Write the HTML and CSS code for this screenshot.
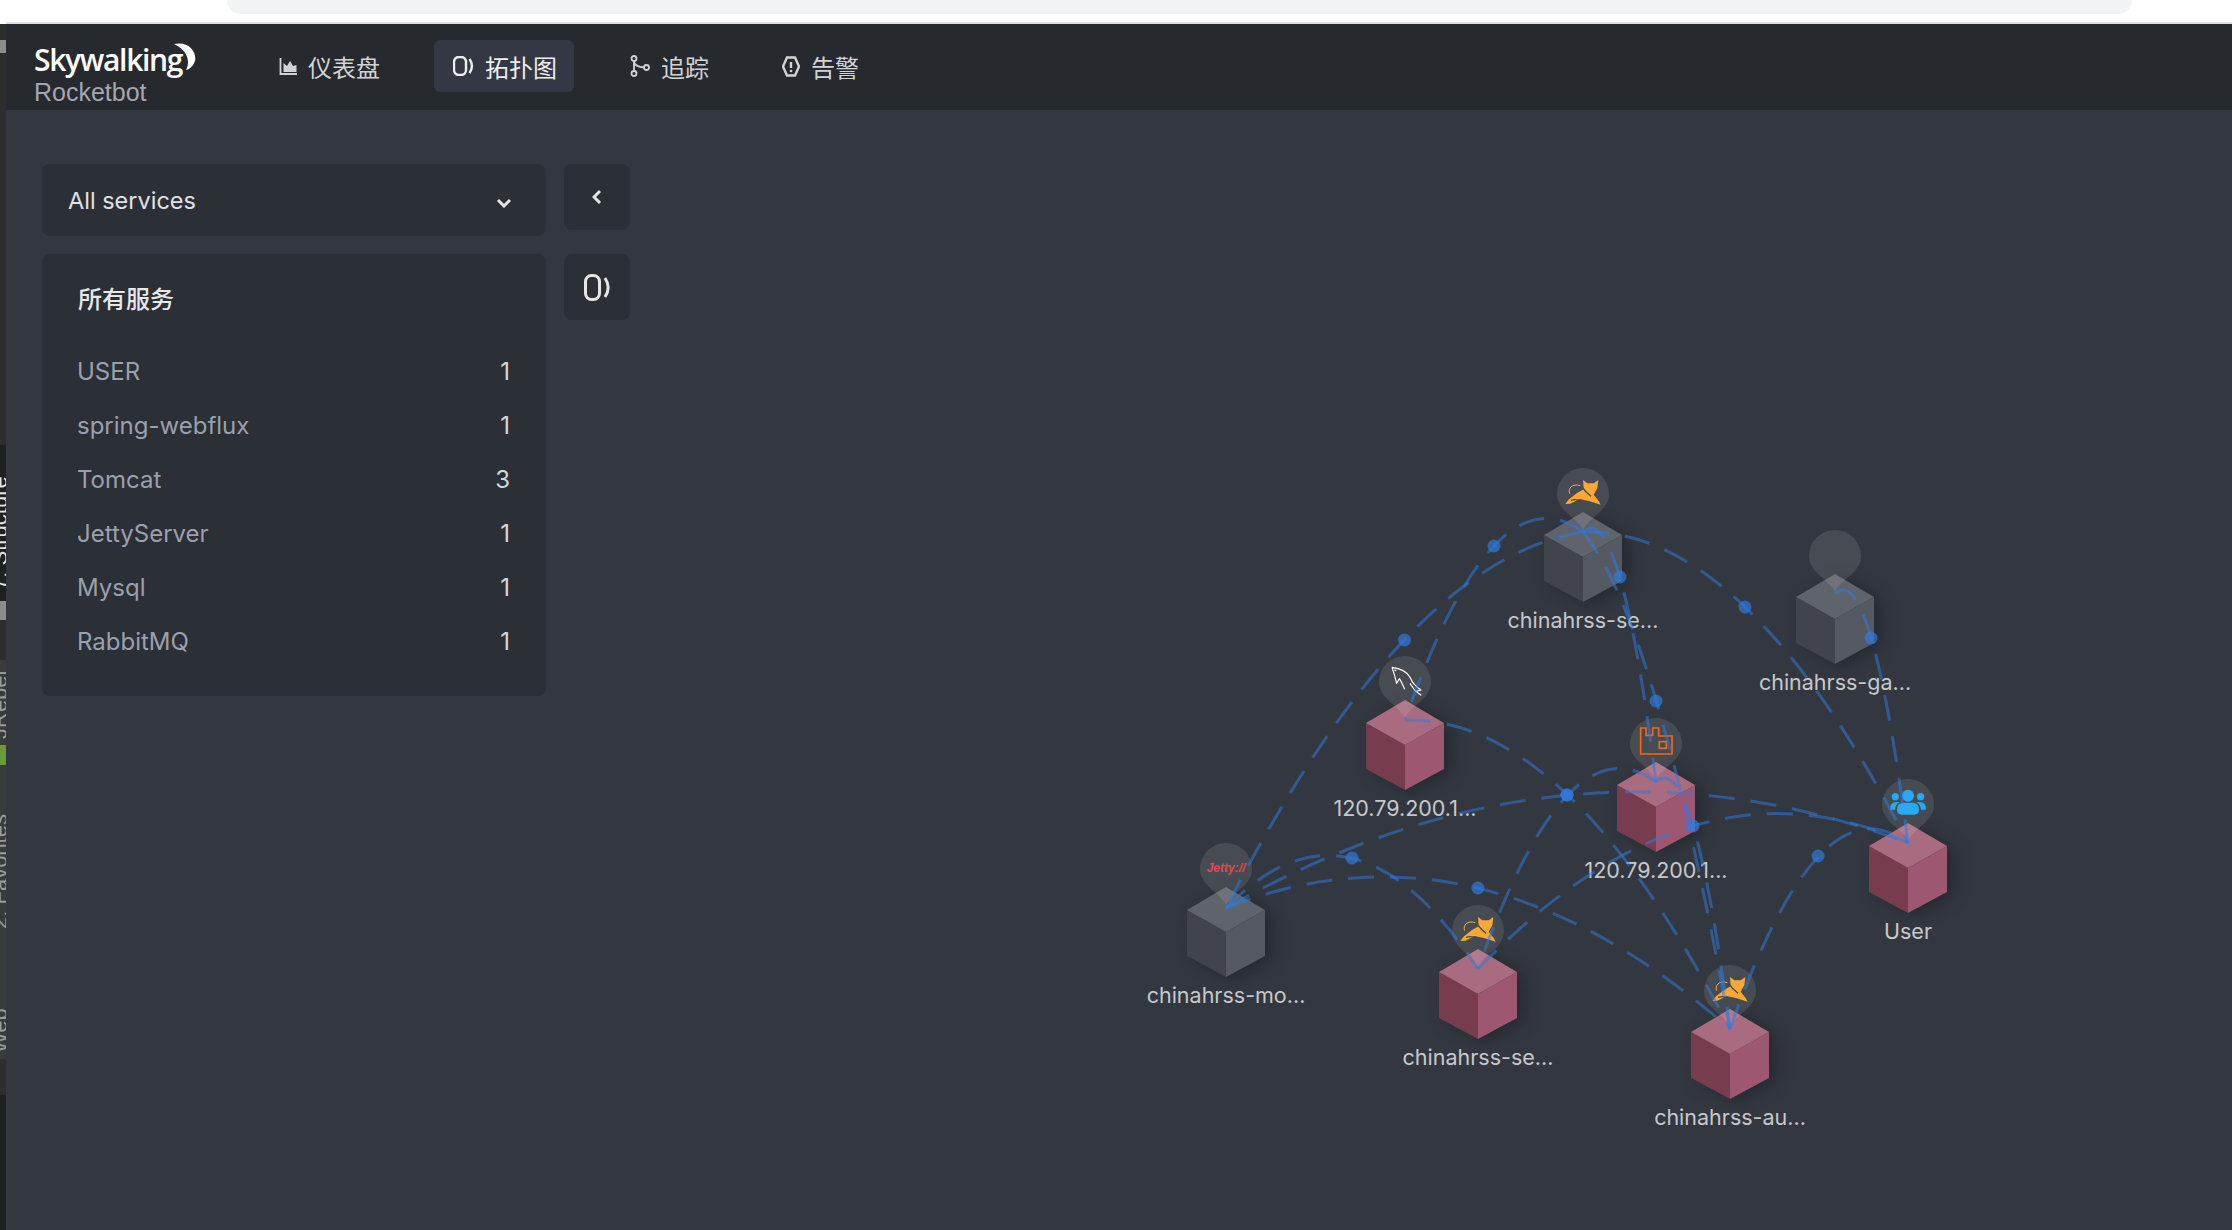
FILE: index.html
```html
<!DOCTYPE html>
<html lang="zh">
<head>
<meta charset="utf-8">
<title>Skywalking Rocketbot</title>
<link rel="stylesheet" href="styles.css">
</head>
<body>
<div class="strip">
  <div class="seg seg-white"></div>
  <div class="seg seg-dark seg-h16"></div>
  <div class="seg seg-grey seg-h13"></div>
  <div class="seg seg-dark seg-h392"></div>
  <div class="seg seg-black seg-h156"><span class="vtext vtext-light">7: Structure</span></div>
  <div class="seg seg-grey seg-h19"></div>
  <div class="seg seg-dark seg-h40"></div>
  <div class="seg seg-mid seg-h85"><span class="vtext">JRebel</span></div>
  <div class="seg seg-green seg-h20"></div>
  <div class="seg seg-mid seg-h170"><span class="vtext">2: Favorites</span></div>
  <div class="seg seg-mid seg-h124"><span class="vtext">Web</span></div>
  <div class="seg seg-dark seg-h36"></div>
  <div class="seg seg-black seg-fill"></div>
</div>
<div class="window">
  <div class="browserbar"><div class="urlfield"></div></div>
  <header class="header">
    <div class="logo">
      <div class="logo-main">Skywalking</div>
      <div class="logo-sub">Rocketbot</div>
      <svg class="moon" viewBox="0 0 24 28" width="24" height="28"><path d="M1 1 C15 -2 24 8 22 18 C20 24 15 27 13 27 C17 20 16 8 1 1Z"/></svg>
    </div>
    <nav class="nav">
      <a class="nav-item">
        <svg class="nav-icon" viewBox="0 0 18 20" width="18" height="20"><path class="ico-line" d="M1.500 2V18H18"/><path class="ico-fill" d="M4.500 16V7L8 10 11 5 14 10 17.500 9V16Z"/></svg>
        <span>仪表盘</span>
      </a>
      <a class="nav-item nav-active">
        <svg class="nav-icon" viewBox="0 0 21 20" width="21" height="20"><rect class="ico-line ico-mid" x="1" y="1" width="12" height="18" rx="5"/><path class="ico-line ico-mid" d="M16.500 3C20 8 20 12 16.500 17"/></svg>
        <span>拓扑图</span>
      </a>
      <a class="nav-item">
        <svg class="nav-icon" viewBox="0 0 20 22" width="20" height="22"><circle class="ico-line" cx="4" cy="3.500" r="2.500"/><circle class="ico-line" cx="4" cy="18.500" r="2.500"/><circle class="ico-line" cx="16.500" cy="12.500" r="2.500"/><path class="ico-line" d="M4 6V16M4 7C5 11 9 12 14 12.500"/></svg>
        <span>追踪</span>
      </a>
      <a class="nav-item">
        <svg class="nav-icon" viewBox="0 0 18 21" width="18" height="21"><path class="ico-line ico-mid" d="M5 1.500H13L17 10.500 13 19.500H5L1 10.500Z"/><path class="ico-line ico-mid" d="M9 6V12"/><circle class="ico-fill" cx="9" cy="15" r="1.300"/></svg>
        <span>告警</span>
      </a>
    </nav>
  </header>
  <main class="main">
    <div class="side-row">
      <div class="select">
        <span>All services</span>
        <svg class="chev" viewBox="0 0 16 10" width="16" height="10"><path d="M2 2L8 8 14 2"/></svg>
      </div>
      <button class="tool"><svg class="chev chev-left" viewBox="0 0 10 16" width="10" height="16"><path d="M8 2L2 8 8 14"/></svg></button>
    </div>
    <div class="side-row">
      <section class="panel">
        <h2 class="panel-title">所有服务</h2>
        <div class="row"><span class="row-name">USER</span><span class="row-num">1</span></div>
        <div class="row"><span class="row-name">spring-webflux</span><span class="row-num">1</span></div>
        <div class="row"><span class="row-name">Tomcat</span><span class="row-num">3</span></div>
        <div class="row"><span class="row-name">JettyServer</span><span class="row-num">1</span></div>
        <div class="row"><span class="row-name">Mysql</span><span class="row-num">1</span></div>
        <div class="row"><span class="row-name">RabbitMQ</span><span class="row-num">1</span></div>
      </section>
      <button class="tool"><svg class="tool-icon" viewBox="0 0 26 27" width="26" height="27"><rect class="ico-line ico-thick" x="1.500" y="1.500" width="14" height="24" rx="6"/><path class="ico-line ico-thick" d="M21 4C25 10 25 17 21 23"/></svg></button>
    </div>

    <svg class="topo" viewBox="0 0 2232 1230" width="2232" height="1230">
      <defs>
        <g id="cube">
          <path class="cube-left" d="M0 45L-39 23V69L0 90Z"/>
          <path class="cube-right" d="M0 45L39 23V69L0 90Z"/>
          <path class="cube-top" d="M0 0L39 23 0 45-39 23Z"/>
        </g>
        <path id="pin" class="pin" d="M0 18C-5 6-26-1-26-18A26 26 0 1 1 26-18C26-1 5 6 0 18Z"/>
        <g id="cat" transform="scale(.3333) translate(-250 -187)">
          <path class="cat-body" d="M250 91L263 101H282L296 91 293 116 282 135 297 154 303 165 270 155 240 148 212 162 197 163 208 149 232 130 252 119Z"/>
          <path class="cat-gap" d="M249 114C256 126 266 134 274 140M214 152C226 148 238 150 248 156"/>
          <path class="cat-tail" d="M242 108C218 100 204 116 210 132"/>
        </g>
      </defs>

      <g class="node node-grey" transform="translate(1583 512)"><use class="cube" href="#cube"/><use href="#pin"/><use href="#cat"/><text class="label" y="116">chinahrss-se...</text></g>
      <g class="node node-grey" transform="translate(1835 574)"><use class="cube" href="#cube"/><use href="#pin"/><text class="label" y="116">chinahrss-ga...</text></g>
      <g class="node node-pink" transform="translate(1405 700)"><use class="cube" href="#cube"/><use href="#pin"/>
        <g transform="scale(.3333) translate(-163 -180)"><path class="dolphin" d="M124 82C142 84 166 90 178 112 186 130 196 142 211 150L195 154 212 166M124 82L131 104 138 130 146 116C152 124 156 134 162 148M131 90L137 92M178 130C185 140 192 152 195 154"/></g>
        <text class="label" y="116">120.79.200.1...</text></g>
      <g class="node node-pink" transform="translate(1656 762)"><use class="cube" href="#cube"/><use href="#pin"/>
        <g transform="scale(.3333) translate(-198 -186)"><path class="rabbit" d="M152 84H168V106H188V84H206V108H246V162H152Z"/><rect class="rabbit" x="208" y="125" width="21" height="20"/></g>
        <text class="label" y="116">120.79.200.1...</text></g>
      <g class="node node-pink" transform="translate(1908 823)"><use class="cube" href="#cube"/><use href="#pin"/>
        <g class="users" transform="scale(.3333) translate(-174 -189)"><circle cx="174" cy="107" r="18"/><circle cx="136" cy="110" r="11"/><circle cx="212" cy="110" r="11"/><path d="M141 150Q141 128 160 128H188Q207 128 207 150Q207 164 192 164H156Q141 164 141 150Z"/><path d="M120 147Q120 126 140 126H149Q136 134 135 149H122Z"/><path d="M228 147Q228 126 208 126H199Q212 134 213 149H226Z"/></g>
        <text class="label" y="116">User</text></g>
      <g class="node node-grey" transform="translate(1226 887)"><use class="cube" href="#cube"/><use href="#pin"/><text class="jetty" y="-15">Jetty://</text><text class="label" y="116">chinahrss-mo...</text></g>
      <g class="node node-pink" transform="translate(1478 949)"><use class="cube" href="#cube"/><use href="#pin"/><use href="#cat"/><text class="label" y="116">chinahrss-se...</text></g>
      <g class="node node-pink" transform="translate(1730 1009)"><use class="cube" href="#cube"/><use href="#pin"/><use href="#cat"/><text class="label" y="116">chinahrss-au...</text></g>

      <g class="edges">
        <path d="M1583 532Q1494 466 1405 720"/>
        <path d="M1583 532Q1404 560 1226 908"/>
        <path d="M1583 532Q1620 497 1656 782"/>
        <path d="M1583 532Q1745 527 1908 843"/>
        <path d="M1583 532Q1656 621 1730 1029"/>
        <path d="M1835 594Q1871 558 1908 843"/>
        <path d="M1226 908Q1567 715 1908 843"/>
        <path d="M1405 720Q1567 715 1730 1029"/>
        <path d="M1656 782Q1567 716 1478 969"/>
        <path d="M1656 782Q1693 746 1730 1029"/>
        <path d="M1478 969Q1693 746 1908 843"/>
        <path d="M1730 1029Q1819 776 1908 843"/>
        <path d="M1226 908Q1352 778 1478 969"/>
        <path d="M1226 908Q1478 808 1730 1029"/>
      </g>
      <g class="anchors">
        <circle cx="1494" cy="546" r="6.500"/><circle cx="1404.500" cy="640" r="6.500"/>
        <circle cx="1620" cy="577" r="6.500"/><circle cx="1745" cy="607" r="6.500"/>
        <circle cx="1871" cy="638" r="6.500"/><circle cx="1656" cy="701" r="6.500"/>
        <circle cx="1567" cy="795" r="6.500"/><circle cx="1567" cy="795" r="6.500"/>
        <circle cx="1693" cy="826" r="6.500"/><circle cx="1818" cy="856" r="6.500"/>
        <circle cx="1352" cy="858" r="6.500"/><circle cx="1478" cy="888" r="6.500"/>
      </g>
    </svg>
  </main>
</div>
</body>
</html>
```
FILE: styles.css
```css
* { box-sizing: border-box; }
html, body { height: 100%; }
body {
  margin: 0;
  display: flex;
  height: 1230px;
  overflow: hidden;
  background: #333840;
  font-family: Inter, "Noto Sans CJK SC", "Liberation Sans", sans-serif;
  color: #d4d5d7;
}

/* IDE edge peeking in at the left */
.strip { width: 6px; flex: none; display: flex; flex-direction: column; background: #3a3b3d; overflow: hidden; }
.seg { display: flex; justify-content: flex-end; overflow: hidden; flex: none; }
.seg-white { height: 24px; background: #fff; }
.seg-dark { background: #2e2e2f; }
.seg-grey { background: #8d8d8d; }
.seg-black { background: #1f2021; }
.seg-mid { background: #3a3b3d; }
.seg-green { background: #6a9a3a; }
.seg-h13 { height: 13px; }
.seg-h16 { height: 16px; }
.seg-h19 { height: 19px; }
.seg-h20 { height: 20px; }
.seg-h36 { height: 36px; }
.seg-h40 { height: 40px; }
.seg-h85 { height: 85px; }
.seg-h124 { height: 124px; }
.seg-h156 { height: 156px; }
.seg-h170 { height: 170px; }
.seg-h392 { height: 392px; }
.seg-fill { flex: 1; }
.vtext {
  flex: none;
  writing-mode: vertical-rl;
  transform: rotate(180deg);
  font: 22px/14px "Liberation Sans", sans-serif;
  color: #9a9b9d;
  white-space: nowrap;
  margin-right: -1px;
  padding-top: 6px;
}
.vtext-light { color: #e2e2e2; padding-top: 11px; }

.window { flex: 1; min-width: 0; display: flex; flex-direction: column; position: relative; }

.browserbar { height: 24px; flex: none; background: #fff; border-bottom: 2px solid #dfe0e1; padding-left: 221px; }
.urlfield { width: 1905px; height: 14px; background: #f1f3f4; border-radius: 0 0 16px 16px; }

.header { height: 86px; flex: none; display: flex; align-items: center; padding-left: 28px; background: #262a2f; }
.logo { position: relative; width: 226px; flex: none; margin-top: 18px; }
.logo-main { font: 600 30px/32px "Open Sans", sans-serif; color: #fff; letter-spacing: -1.300px; }
.logo-sub { font: 25px/32px "Liberation Sans", sans-serif; color: #a3a7b0; }
.moon { position: absolute; left: 139px; top: -1px; fill: #fff; }

.nav { display: flex; gap: 37px; margin-top: -2px; }
.nav-item { display: flex; align-items: center; height: 52px; padding: 0 17px 0 19px; border-radius: 6px; font-size: 24px; color: #d2d3d5; }
.nav-active { background: #343845; color: #eceded; }
.nav-icon { flex: none; margin-right: 11px; }
.ico-line { fill: none; stroke: currentColor; stroke-width: 1.800; }
.ico-mid { stroke-width: 2.400; }
.ico-thick { stroke-width: 3; }
.ico-fill { fill: currentColor; }

.main { flex: 1; position: relative; display: flex; flex-direction: column; gap: 18px; padding: 54px 0 0 36px; }
.side-row { display: flex; gap: 18px; align-items: flex-start; }

.select { width: 504px; height: 72px; display: flex; align-items: center; justify-content: space-between; padding: 0 34px 0 26px; background: #2b2f36; border-radius: 8px; font-size: 23.500px; color: #e1e2e3; }
.chev { fill: none; stroke: #e6e6e6; stroke-width: 3; margin-top: 6px; }
.chev-left { margin-top: 0; }

.tool { width: 66px; height: 66px; padding: 0; border: 0; border-radius: 8px; background: #2b2f36; color: #e6e6e6; display: flex; align-items: center; justify-content: center; }

.panel { width: 504px; padding: 28px 36px 28px 35px; background: #2b2f36; border-radius: 8px; }
.panel-title { margin: 0 0 26px 1px; font-size: 24px; line-height: 36px; font-weight: 500; color: #e8e8e9; }
.row { display: flex; justify-content: space-between; align-items: center; height: 54px; font-size: 24px; }
.row-name { color: #9ba0ad; }
.row-num { color: #d6d7d9; }

/* Topology: a free canvas, so it sits over the page at its own coordinates */
.topo { position: absolute; left: -6px; top: -110px; pointer-events: none; }
.node-grey { --cube-top: #5f636c; --cube-left: #41444d; --cube-right: #555962; }
.node-pink { --cube-top: #a96b80; --cube-left: #773c4e; --cube-right: #9e5771; }
.cube-top { fill: var(--cube-top); }
.cube-left { fill: var(--cube-left); }
.cube-right { fill: var(--cube-right); }
.cube { filter: drop-shadow(7px 3px 8px rgba(10, 12, 16, .35)); }
.pin { fill: #fff; fill-opacity: .1; }
.cat-body { fill: #f8a935; }
.cat-gap { fill: none; stroke: #454952; stroke-width: 4; }
.cat-tail { fill: none; stroke: #f8a935; stroke-width: 3; }
.dolphin { fill: none; stroke: #fff; stroke-width: 3.500; stroke-linejoin: round; }
.rabbit { fill: none; stroke: #f2661f; stroke-width: 5; }
.users { fill: #2aa8f3; }
.jetty { text-anchor: middle; font: italic 700 12px "Liberation Sans", sans-serif; fill: #e2474f; }
.label { text-anchor: middle; font-size: 21.500px; fill: #c6c8cb; }
.edges path { fill: none; stroke: #2f7be0; stroke-opacity: .52; stroke-width: 3; stroke-dasharray: 26 16; }
.anchors circle { fill: #2f7be0; fill-opacity: .68; }
```
